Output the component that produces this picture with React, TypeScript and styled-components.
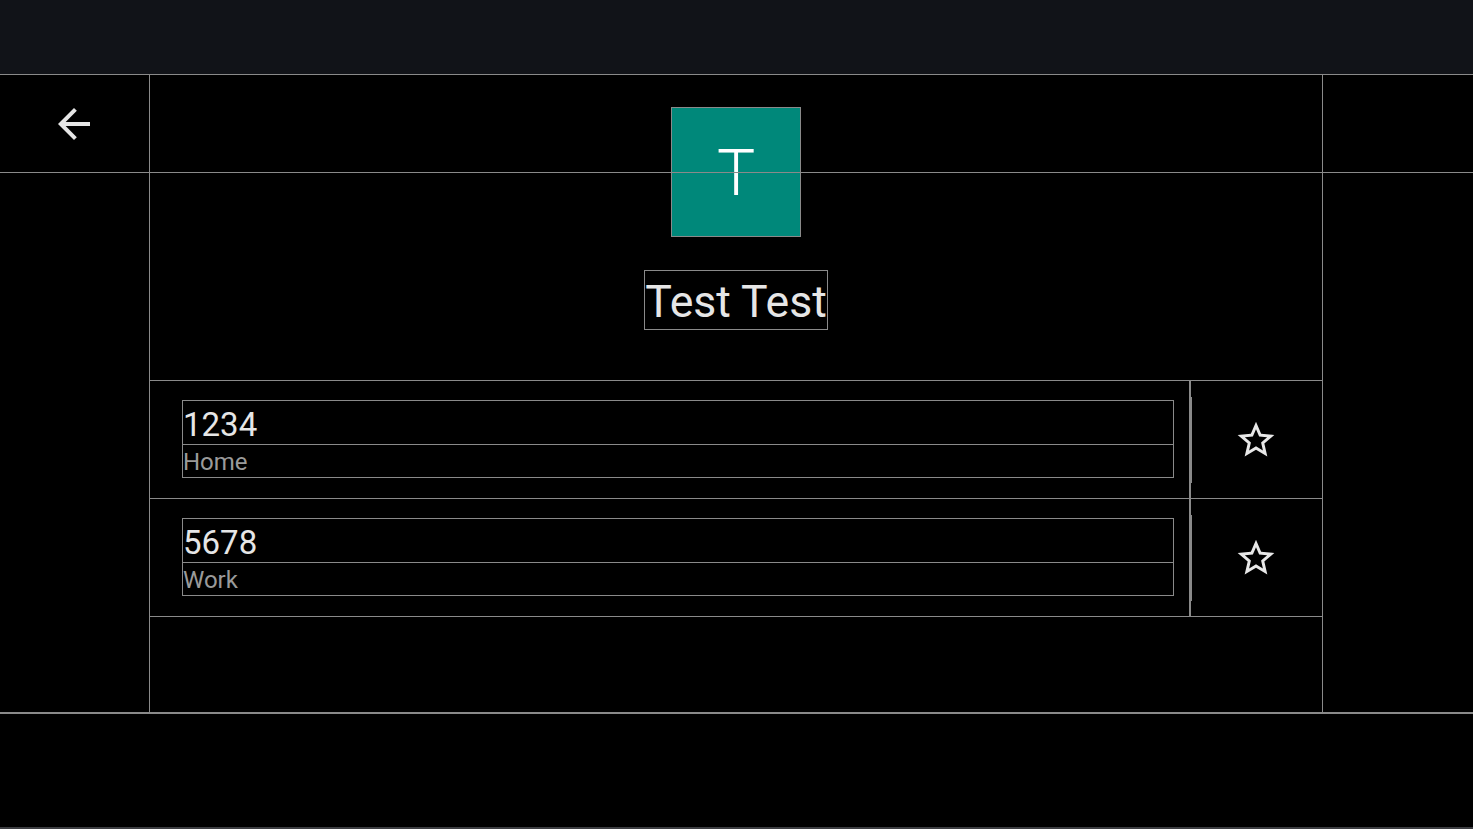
import React from 'react';
import styled, { createGlobalStyle } from 'styled-components';

const GlobalStyle = createGlobalStyle`
	html, body {
		margin: 0;
		padding: 0;
		background: #000000;
		font-family: Roboto, 'Noto Sans', 'Liberation Sans', sans-serif;
	}
`;

const LINE = '#8a8a8a';

type Phone = {
	number: string;
	label: string;
};

const phones: Phone[] = [
	{ number: '1234', label: 'Home' },
	{ number: '5678', label: 'Work' },
];

const Page = styled.div`
	width: 1473px;
	height: 829px;
	display: flex;
	flex-direction: column;
	background: #000000;
	overflow: hidden;
`;

const StatusBar = styled.div`
	height: 74px;
	flex: none;
	background: #111318;
`;

const Screen = styled.div`
	position: relative;
	height: 640px;
	flex: none;
	box-sizing: border-box;
	border-top: 1px solid ${LINE};
	border-bottom: 2px solid ${LINE};
	display: flex;
`;

const Toolbar = styled.div`
	position: absolute;
	top: 0;
	left: 0;
	right: 0;
	height: 98px;
	box-sizing: border-box;
	border-bottom: 1px solid ${LINE};
	display: flex;
	align-items: center;
	pointer-events: none;
`;

const BackButton = styled.div`
	width: 148px;
	height: 100%;
	display: flex;
	align-items: center;
	justify-content: center;
	pointer-events: auto;
	color: #e6e6e6;
`;

const Column = styled.div`
	margin-left: 149px;
	width: 1174px;
	box-sizing: border-box;
	border-left: 1px solid ${LINE};
	border-right: 1px solid ${LINE};
	padding-top: 32px;
	display: flex;
	flex-direction: column;
	align-items: center;
`;

const Avatar = styled.div`
	width: 130px;
	height: 130px;
	box-sizing: border-box;
	border: 1px solid ${LINE};
	background: #00887a;
	color: #ffffff;
	font-size: 64px;
	font-weight: 300;
	line-height: 1;
	display: flex;
	align-items: center;
	justify-content: center;
	padding-top: 4px;
`;

const Name = styled.div`
	margin-top: 33px;
	height: 58px;
	box-sizing: content-box;
	border: 1px solid ${LINE};
	font-size: 44.6px;
	line-height: 64px;
	color: #e6e6e6;
	white-space: nowrap;
	overflow: hidden;
	display: flex;
	align-items: flex-start;
`;

const NameText = styled.span`
	margin-top: -1px;
`;

const PhoneList = styled.div`
	margin-top: 50px;
	align-self: stretch;
	border-bottom: 1px solid ${LINE};
`;

const PhoneRow = styled.div`
	display: flex;
	height: 118px;
	box-sizing: border-box;
	border-top: 1px solid ${LINE};
`;

const PhoneMain = styled.div`
	width: 1041px;
	box-sizing: border-box;
	padding: 19px 15px 20px 32px;
	border-right: 2px solid ${LINE};
`;

const PhoneText = styled.div`
	border: 1px solid ${LINE};
	display: flex;
	flex-direction: column;
`;

const Number = styled.div`
	height: 43px;
	font-size: 33px;
	line-height: 47px;
	color: #e6e6e6;
	border-bottom: 1px solid ${LINE};
	overflow: hidden;
`;

const Label = styled.div`
	height: 32px;
	font-size: 24px;
	line-height: 35px;
	color: #9a9a9a;
	overflow: hidden;
`;

const StarCell = styled.div`
	flex: 1;
	display: flex;
	align-items: center;
`;

const Divider = styled.div`
	width: 1px;
	height: 86px;
	background: ${LINE};
`;

const StarButton = styled.div`
	flex: 1;
	display: flex;
	align-items: center;
	justify-content: center;
	color: #e8e8e8;
	margin-left: -2px;
`;

const BottomArea = styled.div`
	flex: 1;
	background: #000000;
	border-bottom: 2px solid #3c3d41;
`;

const ArrowBackIcon = () => (
	<svg width="48" height="48" viewBox="0 0 24 24" fill="currentColor">
		<path d="M20 11H7.83l5.59-5.59L12 4l-8 8 8 8 1.41-1.41L7.83 13H20v-2z" />
	</svg>
);

const StarBorderIcon = () => (
	<svg width="44" height="44" viewBox="0 0 24 24" fill="currentColor">
		<path d="M22 9.24l-7.19-.62L12 2 9.19 8.63 2 9.24l5.46 4.73L5.82 21 12 17.27 18.18 21l-1.63-7.03L22 9.24zM12 15.4l-3.76 2.27 1-4.28-3.32-2.88 4.38-.38L12 6.1l1.71 4.04 4.38.38-3.32 2.88 1 4.28L12 15.4z" />
	</svg>
);

const App = () => {
	return (
		<Page>
			<GlobalStyle />
			<StatusBar />
			<Screen>
				<Column>
					<Avatar>T</Avatar>
					<Name>
						<NameText>Test Test</NameText>
					</Name>
					<PhoneList>
						{phones.map((phone) => (
							<PhoneRow key={phone.number}>
								<PhoneMain>
									<PhoneText>
										<Number>{phone.number}</Number>
										<Label>{phone.label}</Label>
									</PhoneText>
								</PhoneMain>
								<StarCell>
									<Divider />
									<StarButton>
										<StarBorderIcon />
									</StarButton>
								</StarCell>
							</PhoneRow>
						))}
					</PhoneList>
				</Column>
				<Toolbar>
					<BackButton>
						<ArrowBackIcon />
					</BackButton>
				</Toolbar>
			</Screen>
			<BottomArea />
		</Page>
	);
};

export default App;
